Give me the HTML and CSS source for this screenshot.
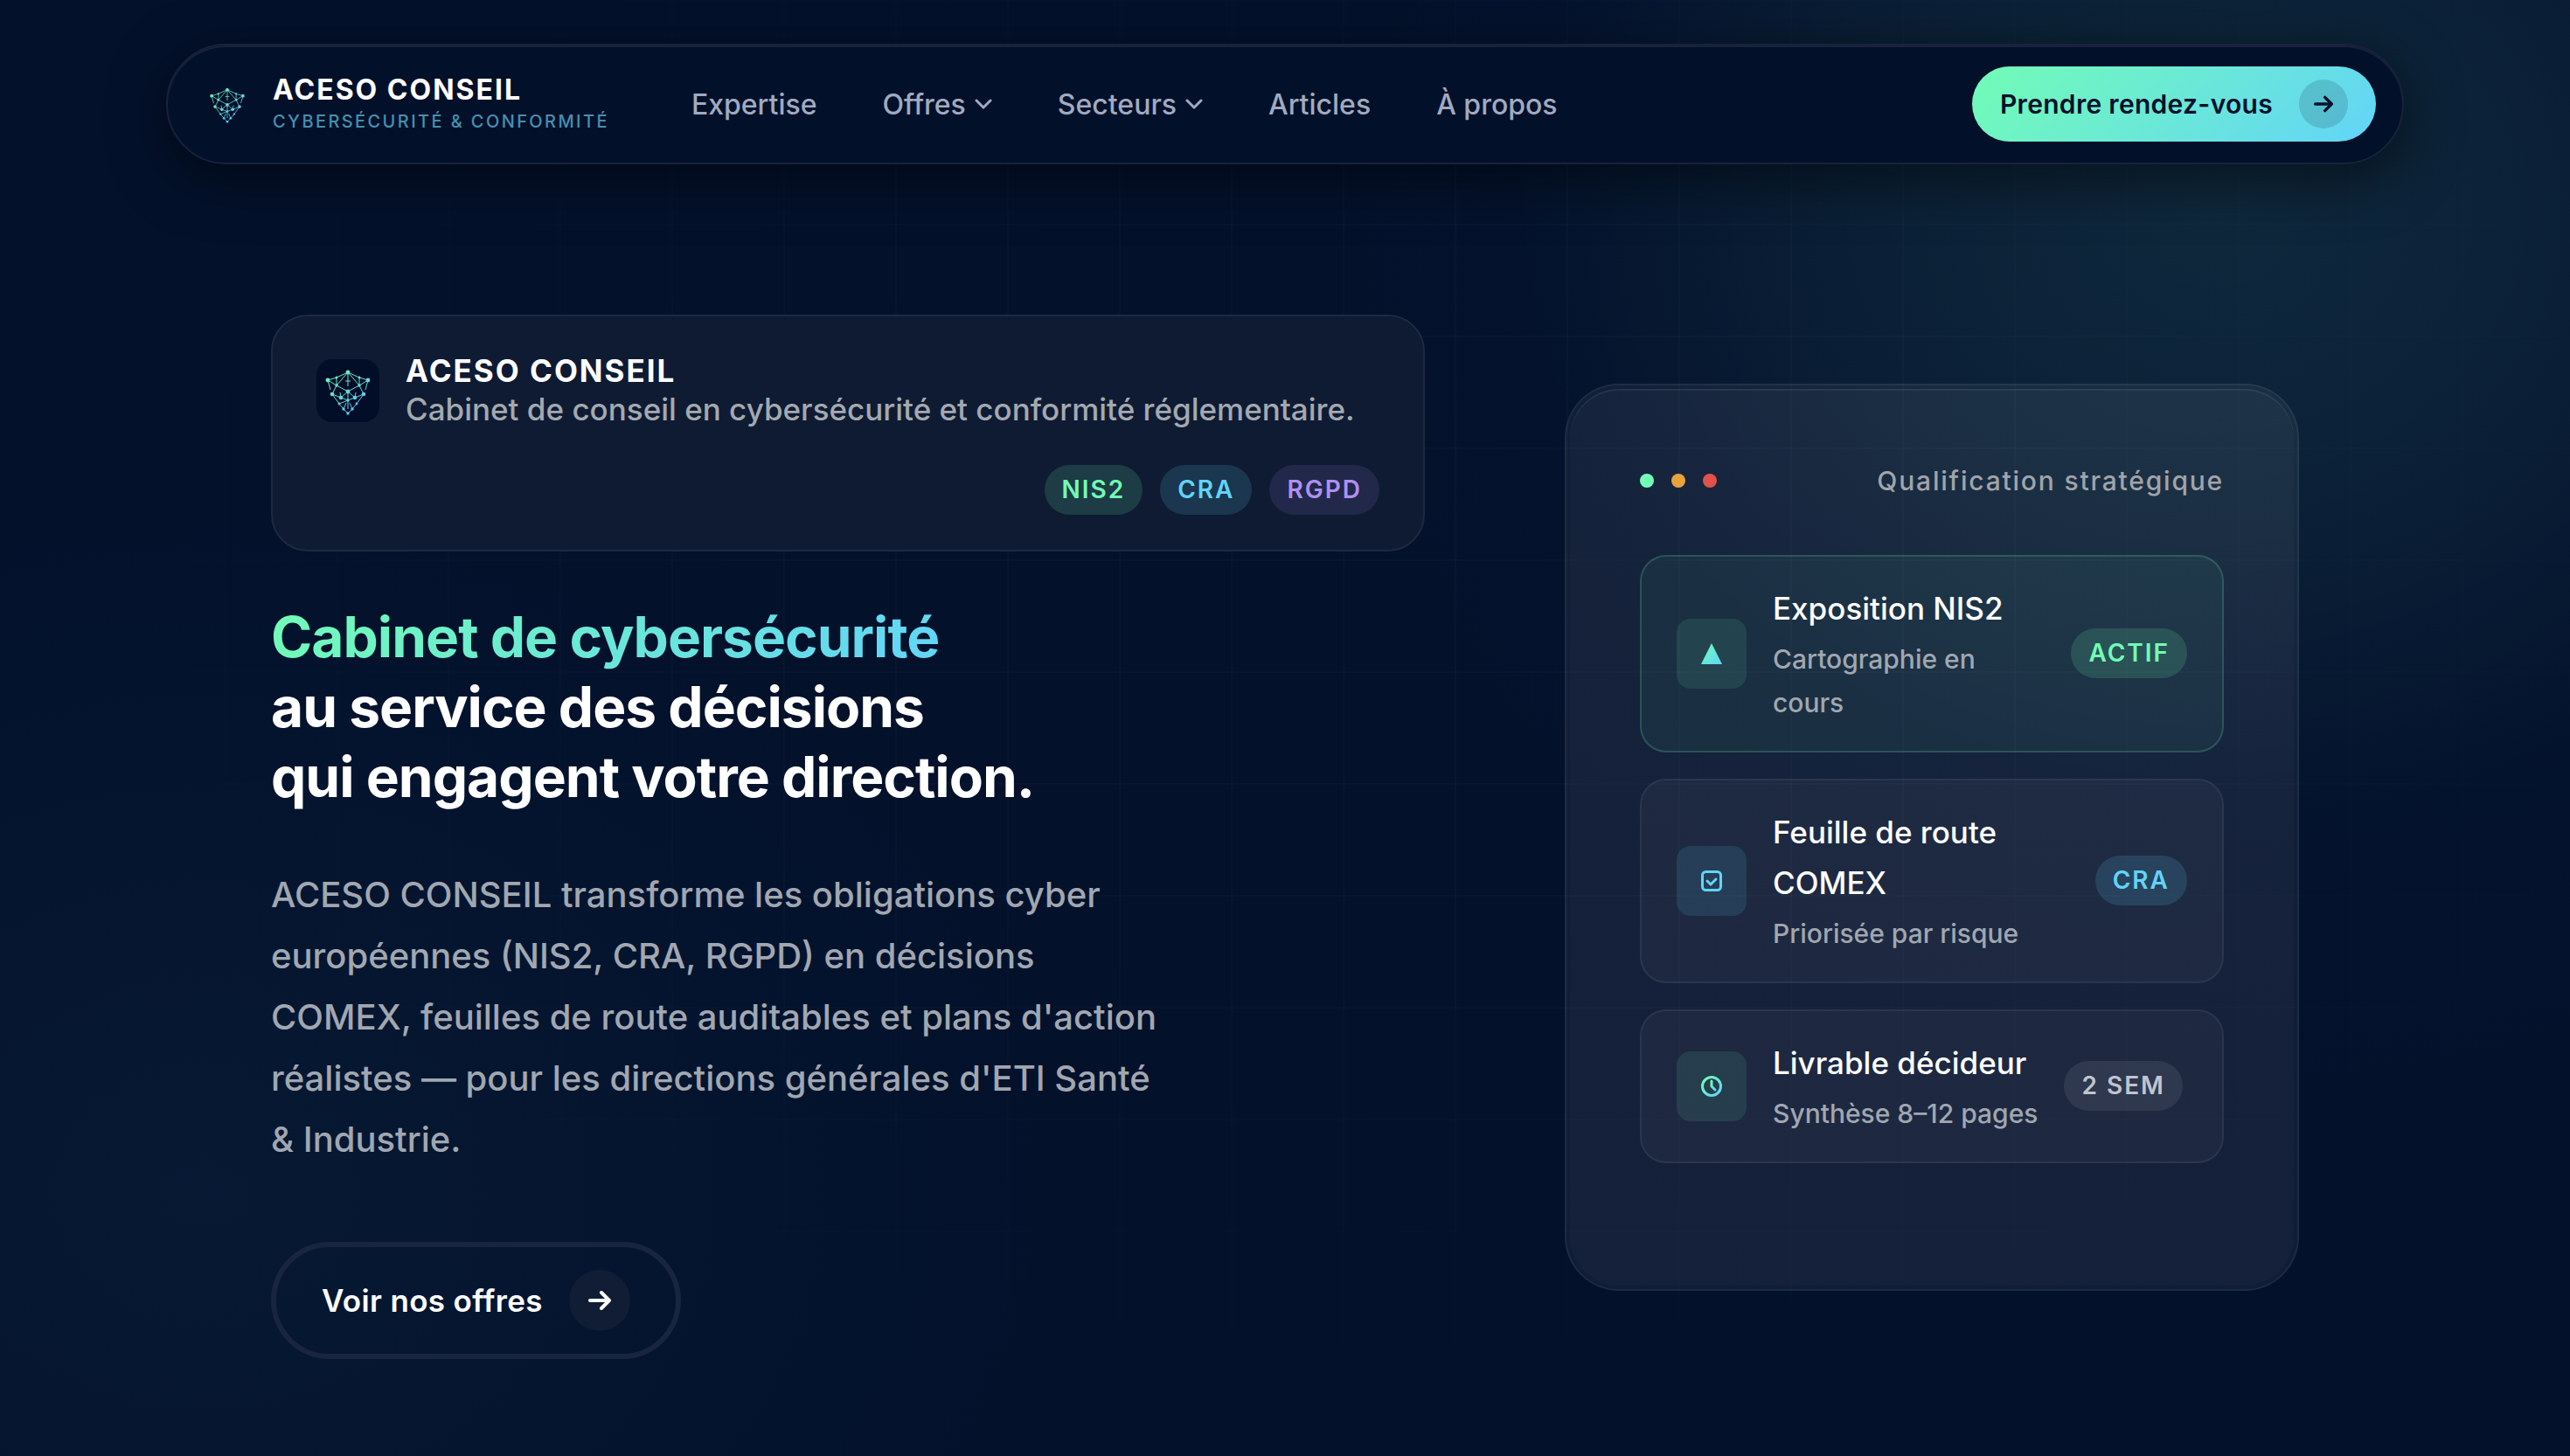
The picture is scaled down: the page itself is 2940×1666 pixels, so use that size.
FILE: index.html
```html
<!DOCTYPE html>
<html lang="fr">

<head>
  <meta charset="UTF-8">
  <meta name="viewport" content="width=device-width, initial-scale=1.0">
  <title>ACESO CONSEIL</title>
  <link rel="stylesheet" href="styles.css">
</head>

<body>
  <!-- Dégradé et logo partagés -->
  <svg class="sprite" aria-hidden="true">
    <defs>
      <linearGradient id="brand" x1="0" y1="0" x2="1" y2="1">
        <stop offset="0" stop-color="#72fcb6" />
        <stop offset="1" stop-color="#62d4f8" />
      </linearGradient>
      <linearGradient id="shieldStroke" gradientUnits="userSpaceOnUse" x1="18" y1="14" x2="44" y2="54">
        <stop offset="0" stop-color="#6ef5b0" />
        <stop offset="1" stop-color="#5ec8f0" />
      </linearGradient>
      <symbol id="shield" viewBox="0 0 72 72">
        <g fill="none" stroke="url(#shieldStroke)" stroke-width="1">
          <path d="M36 15L23 21L13 24L16 35M36 15L49 21L59 24L56 35" />
          <path d="M18 40L26 51L31 57L36 62L41 57L46 51L54 40" />
          <path d="M36 15L23 30L13 24M36 15L49 30L59 24M23 21V30L18 40M49 21V30L54 40" />
          <path d="M36 15V31M33 25H39M23 30L36 37L49 30M36 37V57" />
          <path d="M18 40L28 44L36 37L44 44L54 40M27 38L28 44L36 47L44 44L45 38" />
          <path d="M26 51L36 47M31 57L34 50M41 57L38 50" />
        </g>
        <g fill="url(#shieldStroke)">
          <circle cx="36" cy="15" r="2.4" />
          <circle cx="13" cy="24" r="2.4" />
          <circle cx="59" cy="24" r="2.4" />
          <circle cx="23" cy="21" r="1.4" />
          <circle cx="49" cy="21" r="1.4" />
          <circle cx="23" cy="30" r="1.7" />
          <circle cx="49" cy="30" r="1.7" />
          <circle cx="36" cy="37" r="2.4" />
          <circle cx="18" cy="40" r="2.3" />
          <circle cx="54" cy="40" r="2.3" />
          <circle cx="28" cy="44" r="2.3" />
          <circle cx="44" cy="44" r="2.3" />
          <circle cx="36" cy="47" r="1.7" />
          <circle cx="26" cy="51" r="1.4" />
          <circle cx="46" cy="51" r="1.4" />
          <circle cx="31" cy="57" r="1.7" />
          <circle cx="41" cy="57" r="1.7" />
          <circle cx="36" cy="62" r="1.7" />
        </g>
      </symbol>
    </defs>
  </svg>

  <header class="navbar">
    <a class="brand" href="#">
      <svg class="brand-logo" aria-hidden="true"><use href="#shield" /></svg>
      <span class="brand-text">
        <span class="brand-name">ACESO CONSEIL</span>
        <span class="brand-tagline">CYBERSÉCURITÉ &amp; CONFORMITÉ</span>
      </span>
    </a>

    <nav class="nav-links">
      <a href="#">Expertise</a>
      <a href="#">Offres
        <svg class="chevron" viewBox="0 0 20 12" aria-hidden="true"><path d="M2 2l8 8 8-8" /></svg>
      </a>
      <a href="#">Secteurs
        <svg class="chevron" viewBox="0 0 20 12" aria-hidden="true"><path d="M2 2l8 8 8-8" /></svg>
      </a>
      <a href="#">Articles</a>
      <a href="#">À propos</a>
    </nav>

    <a class="btn-primary" href="#">Prendre rendez-vous
      <span class="btn-icon">
        <svg viewBox="0 0 26 22" aria-hidden="true"><path d="M2 11h22M15 2l9 9-9 9" /></svg>
      </span>
    </a>
  </header>

  <main class="hero">
    <div class="hero-content">
      <div class="intro-card">
        <div class="intro-head">
          <svg class="intro-logo" aria-hidden="true"><use href="#shield" /></svg>
          <div>
            <p class="intro-name">ACESO CONSEIL</p>
            <p class="intro-desc">Cabinet de conseil en cybersécurité et conformité réglementaire.</p>
          </div>
        </div>
        <div class="intro-tags">
          <span class="tag tag-green">NIS2</span>
          <span class="tag tag-blue">CRA</span>
          <span class="tag tag-purple">RGPD</span>
        </div>
      </div>

      <h1><span class="gradient-text">Cabinet de cybersécurité</span><br>au service des décisions<br>qui engagent votre direction.</h1>

      <p class="lead">ACESO CONSEIL transforme les obligations cyber européennes (NIS2, CRA, RGPD) en décisions COMEX, feuilles de route auditables et plans d'action réalistes — pour les directions générales d'ETI Santé &amp; Industrie.</p>

      <a class="btn-secondary" href="#">Voir nos offres
        <span class="btn-icon">
          <svg viewBox="0 0 26 22" aria-hidden="true"><path d="M2 11h22M15 2l9 9-9 9" /></svg>
        </span>
      </a>
    </div>

    <div class="panel">
      <div class="panel-inner">
        <div class="panel-head">
          <div class="dots">
            <span class="dot dot-green"></span>
            <span class="dot dot-amber"></span>
            <span class="dot dot-red"></span>
          </div>
          <span class="panel-title">Qualification stratégique</span>
        </div>

        <ul class="steps">
          <li class="step step-active">
            <span class="step-icon">
              <svg viewBox="0 0 24 24" aria-hidden="true"><path d="M12 0l12 24H0z" fill="url(#brand)" /></svg>
            </span>
            <div class="step-text">
              <p class="step-title">Exposition NIS2</p>
              <p class="step-sub">Cartographie en cours</p>
            </div>
            <span class="tag tag-green">ACTIF</span>
          </li>
          <li class="step">
            <span class="step-icon step-icon-blue">
              <svg viewBox="0 0 24 24" fill="none" stroke="#62d4f8" stroke-width="3" stroke-linecap="round" stroke-linejoin="round" aria-hidden="true">
                <rect x="1.5" y="1.5" width="21" height="21" rx="4" />
                <path d="M7 12l4 4 6-6" />
              </svg>
            </span>
            <div class="step-text">
              <p class="step-title">Feuille de route COMEX</p>
              <p class="step-sub">Priorisée par risque</p>
            </div>
            <span class="tag tag-blue">CRA</span>
          </li>
          <li class="step">
            <span class="step-icon">
              <svg viewBox="0 0 24 24" fill="none" stroke="url(#brand)" stroke-width="3" stroke-linecap="round" stroke-linejoin="round" aria-hidden="true">
                <circle cx="12" cy="12" r="10.5" />
                <path d="M12 6v6l4 4" />
              </svg>
            </span>
            <div class="step-text">
              <p class="step-title">Livrable décideur</p>
              <p class="step-sub">Synthèse 8–12 pages</p>
            </div>
            <span class="tag tag-grey">2 SEM</span>
          </li>
        </ul>
      </div>
    </div>
  </main>
</body>

</html>
```
FILE: styles.css
```css
* {
  box-sizing: border-box;
  margin: 0;
  padding: 0;
}

body {
  position: relative;
  min-height: 100vh;
  padding: 50px 60px 110px;
  font-family: Inter, "Liberation Sans", sans-serif;
  font-weight: 450;
  color: #ffffff;
  background:
    radial-gradient(ellipse 800px 700px at 86% 14%, rgba(114, 252, 182, 0.08), rgba(114, 252, 182, 0.05) 50%, transparent),
    radial-gradient(ellipse 1100px 1000px at 88% 18%, rgba(98, 180, 248, 0.03), transparent),
    radial-gradient(ellipse 1000px 800px at 8% 82%, rgba(98, 212, 248, 0.04), transparent),
    #03112b;
}

/* Grille de fond */
body::before {
  content: "";
  position: absolute;
  inset: 0;
  z-index: -1;
  background-image:
    linear-gradient(rgba(255, 255, 255, 0.02) 2px, transparent 2px),
    linear-gradient(90deg, rgba(255, 255, 255, 0.02) 2px, transparent 2px);
  background-size: 128px 128px;
  mask-image: radial-gradient(ellipse at 55% 40%, #000 30%, transparent 75%);
}

a {
  color: inherit;
  text-decoration: none;
}

.sprite {
  position: absolute;
  width: 0;
  height: 0;
}

/* Navigation */
.navbar {
  display: flex;
  align-items: center;
  max-width: 2560px;
  margin: 0 auto;
  padding: 24px 30px 24px 40px;
  background: #031029;
  border: 2px solid #18223d;
  border-radius: 70px;
  box-shadow: 0 16px 64px rgba(0, 0, 0, 0.5), inset 0 2px 0 #18223d;
}

.brand {
  display: flex;
  align-items: center;
  gap: 24px;
}

.brand-logo {
  width: 56px;
  height: 56px;
}

.brand-text {
  display: flex;
  flex-direction: column;
  gap: 4px;
}

.brand-name {
  font-size: 32px;
  font-weight: 700;
  line-height: 36px;
  letter-spacing: 2px;
}

.brand-tagline {
  font-size: 20px;
  line-height: 28px;
  letter-spacing: 0.12em;
  color: #4590b0;
}

.nav-links {
  display: flex;
  gap: 75px;
  margin-left: 94px;
  font-size: 32px;
  font-weight: 500;
  color: #a0aac0;
}

.nav-links a {
  display: flex;
  align-items: center;
  gap: 10px;
}

.chevron {
  width: 20px;
  height: 12px;
  fill: none;
  stroke: currentColor;
  stroke-width: 3;
  stroke-linecap: round;
  stroke-linejoin: round;
}

.btn-primary,
.btn-secondary {
  display: inline-flex;
  align-items: center;
  gap: 30px;
  font-weight: 600;
  letter-spacing: 0.01em;
  border-radius: 70px;
}

.btn-primary {
  margin-left: auto;
  padding: 15px 32px;
  font-size: 30px;
  color: #04112a;
  background: linear-gradient(135deg, #72fcb6, #62d4f8);
}

.btn-icon {
  display: flex;
  align-items: center;
  justify-content: center;
  width: 56px;
  height: 56px;
  border-radius: 50%;
  background: rgba(4, 17, 42, 0.15);
}

.btn-icon svg {
  width: 22px;
  height: 20px;
  fill: none;
  stroke: currentColor;
  stroke-width: 4;
  stroke-linecap: round;
  stroke-linejoin: round;
}

/* Hero */
.hero {
  display: grid;
  grid-template-columns: 11fr 7fr;
  gap: 160px;
  align-items: center;
  max-width: 2320px;
  margin: 172px auto 0;
}

.intro-card {
  padding: 40px 50px;
  background: #0f1b32;
  border: 2px solid #1e2941;
  border-radius: 42px;
}

.intro-head {
  display: flex;
  align-items: center;
  gap: 30px;
}

.intro-logo {
  width: 72px;
  height: 72px;
  border-radius: 18px;
  background: #020e28;
}

.intro-name {
  font-size: 35px;
  font-weight: 700;
  line-height: 44px;
  letter-spacing: 2px;
}

.intro-desc {
  padding-bottom: 2px;
  font-size: 35px;
  line-height: 44px;
  color: #a3a9b1;
}

.intro-tags {
  display: flex;
  justify-content: flex-end;
  gap: 20px;
  margin-top: 40px;
}

.tag {
  padding: 0 20px;
  font-size: 28px;
  font-weight: 600;
  line-height: 57px;
  letter-spacing: 2px;
  white-space: nowrap;
  border-radius: 30px;
}

.tag-green {
  color: #72fcb6;
  background: rgba(114, 252, 182, 0.15);
}

.tag-blue {
  color: #62d4f8;
  background: rgba(98, 212, 248, 0.15);
}

.tag-purple {
  color: #ae90f4;
  background: rgba(167, 139, 250, 0.12);
}

.tag-grey {
  color: #c0c5cf;
  background: rgba(255, 255, 255, 0.08);
}

h1 {
  margin-top: 58px;
  font-size: 64px;
  font-weight: 700;
  line-height: 80px;
  letter-spacing: -1px;
}

.gradient-text {
  color: transparent;
  background: linear-gradient(135deg, #72fcb6, #62d4f8);
  background-clip: text;
}

.lead {
  max-width: 1020px;
  margin-top: 60px;
  font-size: 40px;
  line-height: 70px;
  color: #a0a7b1;
}

.btn-secondary {
  margin-top: 82px;
  padding: 26px 52px;
  font-size: 35px;
  border: 6px solid #19253f;
}

.btn-secondary .btn-icon {
  width: 70px;
  height: 70px;
  background: #111d35;
}

.btn-secondary svg {
  width: 26px;
  height: 22px;
}

/* Panneau de qualification */
.panel {
  padding: 4px;
  background: rgba(255, 255, 255, 0.05);
  border: 2px solid rgba(255, 255, 255, 0.06);
  border-radius: 62px;
}

.panel-inner {
  padding: 80px 80px 140px;
  background: linear-gradient(rgba(255, 255, 255, 0.02), rgba(200, 120, 200, 0.03));
  border-radius: 56px;
  box-shadow: inset 0 2px 0 rgba(255, 255, 255, 0.07);
}

.panel-head {
  display: flex;
  align-items: center;
  justify-content: space-between;
}

.dots {
  display: flex;
  gap: 20px;
}

.dot {
  width: 16px;
  height: 16px;
  border-radius: 50%;
}

.dot-green {
  background: #72fcb6;
}

.dot-amber {
  background: #e8a33d;
}

.dot-red {
  background: #e0524b;
}

.panel-title {
  font-size: 30px;
  line-height: 50px;
  letter-spacing: 0.06em;
  color: #a0a4ab;
}

.steps {
  display: flex;
  flex-direction: column;
  gap: 30px;
  margin-top: 60px;
  list-style: none;
}

.step {
  display: flex;
  align-items: center;
  gap: 30px;
  padding: 30px 40px;
  background: rgba(255, 255, 255, 0.04);
  border: 2px solid rgba(255, 255, 255, 0.06);
  border-radius: 30px;
}

.step-active {
  background: rgba(114, 252, 182, 0.06);
  border-color: rgba(114, 252, 182, 0.18);
}

.step-icon {
  display: flex;
  flex: none;
  align-items: center;
  justify-content: center;
  width: 80px;
  height: 80px;
  border-radius: 16px;
  background: rgba(114, 252, 182, 0.1);
}

.step-icon-blue {
  background: rgba(98, 212, 248, 0.12);
}

.step-icon svg {
  width: 24px;
  height: 24px;
}

.step-title {
  font-size: 35px;
  font-weight: 500;
  line-height: 58px;
}

.step-sub {
  margin-top: 4px;
  font-size: 30px;
  line-height: 50px;
  color: #a0a7b1;
}
```
